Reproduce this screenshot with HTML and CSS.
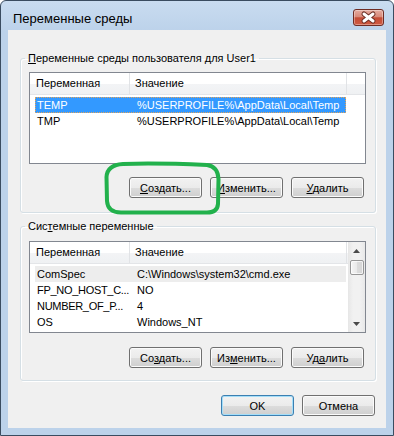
FILE: index.html
```html
<!DOCTYPE html>
<html lang="ru">
<head>
<meta charset="utf-8">
<title>Переменные среды</title>
<link rel="stylesheet" href="styles.css">
</head>
<body>
<div class="window">
  <div class="titlebar">
    <span class="title">Переменные среды</span>
    <div class="close">
      <svg width="29" height="15" viewBox="0 0 29 15">
        <path d="M10 4 L19 11 M19 4 L10 11" stroke="#6d3027" stroke-width="5" stroke-linecap="round"/>
        <path d="M10 4 L19 11 M19 4 L10 11" stroke="#ffffff" stroke-width="3" stroke-linecap="round"/>
      </svg>
    </div>
  </div>
  <div class="client">
    <fieldset class="group">
      <legend class="group-title"><u>П</u>еременные среды пользователя для User1</legend>
      <div class="listview">
        <div class="lv-main">
          <div class="lv-head">
            <div class="hcell c1">Переменная</div>
            <div class="hcell c2">Значение</div>
          </div>
          <div class="lv-row selected">
            <div class="cell c1">TEMP</div>
            <div class="cell c2">%USERPROFILE%\AppData\Local\Temp</div>
          </div>
          <div class="lv-row">
            <div class="cell c1">TMP</div>
            <div class="cell c2">%USERPROFILE%\AppData\Local\Temp</div>
          </div>
        </div>
      </div>
      <div class="btnrow">
        <button class="btn"><u>С</u>оздать...</button>
        <button class="btn"><u>И</u>зменить...</button>
        <button class="btn"><u>У</u>далить</button>
      </div>
    </fieldset>

    <fieldset class="group group2">
      <legend class="group-title">Сис<u>т</u>емные переменные</legend>
      <div class="listview">
        <div class="lv-main">
          <div class="lv-head">
            <div class="hcell c1">Переменная</div>
            <div class="hcell c2">Значение</div>
          </div>
          <div class="lv-row inactive">
            <div class="cell c1">ComSpec</div>
            <div class="cell c2">C:\Windows\system32\cmd.exe</div>
          </div>
          <div class="lv-row">
            <div class="cell c1 tight">FP_NO_HOST_C...</div>
            <div class="cell c2">NO</div>
          </div>
          <div class="lv-row">
            <div class="cell c1 tight">NUMBER_OF_P...</div>
            <div class="cell c2">4</div>
          </div>
          <div class="lv-row">
            <div class="cell c1">OS</div>
            <div class="cell c2">Windows_NT</div>
          </div>
        </div>
        <div class="scrollbar">
          <div class="sb-arrow">
            <svg width="7" height="4" viewBox="0 0 7 4"><path d="M0 4 L3.5 0 L7 4 Z" fill="#4a4a4a"/></svg>
          </div>
          <div class="sb-thumb"></div>
          <div class="sb-track"></div>
          <div class="sb-arrow">
            <svg width="7" height="4" viewBox="0 0 7 4"><path d="M0 0 L7 0 L3.5 4 Z" fill="#4a4a4a"/></svg>
          </div>
        </div>
      </div>
      <div class="btnrow">
        <button class="btn">Со<u>з</u>дать...</button>
        <button class="btn">Из<u>м</u>енить...</button>
        <button class="btn">Уд<u>а</u>лить</button>
      </div>
    </fieldset>

    <div class="footer">
      <button class="btn default">OK</button>
      <button class="btn">Отмена</button>
    </div>
  </div>

  <svg class="annotation" width="121" height="56" viewBox="0 0 121 56">
    <path d="M20 3 C50 2 80 3 104 4 C112 5 115 10 115.5 18 L115 43 C114.5 49 111 51.5 104 51.5 L18 51.5 C10 51.5 4.5 48 4 40 L3.5 16 C4 8 10 3.5 20 3 Z" fill="none" stroke="#22b14c" stroke-width="4"/>
  </svg>
</div>
</body>
</html>
```

FILE: styles.css
```css
* {
  box-sizing: border-box;
}

html,
body {
  margin: 0;
  padding: 0;
  background: #ffffff;
}

body {
  font-family: "Liberation Sans", Arial, sans-serif;
  font-size: 11px;
  color: #000000;
}

.window {
  position: relative;
  width: 394px;
  height: 436px;
  display: flex;
  flex-direction: column;
  padding: 0 7px 7px 7px;
  border: 1px solid #3a4c60;
  border-radius: 6px 6px 0 0;
  background: linear-gradient(#c9dcf0 0px, #bcd2ea 30px, #bcd2ea 100%);
}

.titlebar {
  height: 29px;
  flex: none;
  display: flex;
  justify-content: space-between;
  align-items: flex-start;
}

.title {
  margin: 10px 0 0 5px;
  font-size: 13px;
  line-height: 16px;
}

.close {
  width: 31px;
  height: 17px;
  margin: 8px 2px 0 0;
  border: 1px solid #6e2c24;
  border-radius: 3px;
  background: linear-gradient(#e5ab9f 0%, #d88a7a 45%, #c44c36 52%, #cf5a41 100%);
  box-shadow: inset 0 0 0 1px rgba(255, 255, 255, 0.35);
  display: flex;
}

.client {
  flex: 1;
  background: #f0f0f0;
  padding: 21px 10px 0 12px;
  display: flex;
  flex-direction: column;
}

.group {
  margin: 0;
  min-width: 0;
  padding: 7px 9px 14px 8px;
  border: 1px solid #d5dfe5;
  border-radius: 3px;
  box-shadow: inset 1px 1px 0 #ffffff, 1px 1px 0 #ffffff;
}

.group2 {
  margin-top: 6px;
  padding-top: 8px;
  padding-bottom: 12px;
}

.group-title {
  margin-left: -4px;
  padding: 0 3px;
  line-height: 14px;
  font-size: 11px;
}

.listview {
  height: 92px;
  display: flex;
  border: 1px solid #828790;
  background: #ffffff;
}

.lv-main {
  flex: 1;
  min-width: 0;
}

.lv-head {
  display: flex;
  height: 22px;
  margin-bottom: 2px;
  background: linear-gradient(#ffffff 0%, #ffffff 50%, #f3f4f6 51%, #eff1f3 100%);
  border-bottom: 1px solid #e3e5e8;
}

.hcell {
  line-height: 21px;
  white-space: nowrap;
  overflow: hidden;
}

.hcell.c1 {
  width: 100px;
  padding-left: 6px;
  border-right: 1px solid #e1e3e6;
}

.hcell.c2 {
  width: 217px;
  padding-left: 5px;
  border-right: 1px solid #e1e3e6;
}

.lv-row {
  display: flex;
  width: 311px;
  height: 16px;
  margin-left: 5px;
  line-height: 17px;
  white-space: nowrap;
}

.cell {
  overflow: visible;
}

.cell.c1 {
  width: 95px;
  flex: none;
  padding-left: 2px;
}

.cell.tight {
  letter-spacing: -0.3px;
}

.cell.c2 {
  flex: 1;
  padding-left: 7px;
}

.lv-row.selected {
  background: #3399ff;
  color: #ffffff;
  outline: 1px dotted #e2a45a;
  outline-offset: -1px;
}

.lv-row.inactive {
  background: #ededed;
}

.scrollbar {
  width: 17px;
  flex: none;
  display: flex;
  flex-direction: column;
  background: linear-gradient(90deg, #e6e6e6 0%, #f1f1f1 30%, #f1f1f1 70%, #e8e8e8 100%);
}

.sb-arrow {
  height: 17px;
  flex: none;
  display: flex;
  align-items: center;
  justify-content: center;
}

.sb-thumb {
  height: 15px;
  margin: 1px 1px 0 2px;
  border: 1px solid #979797;
  border-radius: 2px;
  background: linear-gradient(90deg, #f5f5f5 0%, #e9e9e9 50%, #dcdcdc 51%, #d5d5d5 100%);
  box-shadow: inset 0 0 0 1px rgba(255, 255, 255, 0.7);
}

.sb-track {
  flex: 1;
}

.btnrow {
  display: flex;
  justify-content: flex-end;
  gap: 8px;
  margin-top: 13px;
  padding-right: 2px;
}

.group2 .btnrow {
  margin-top: 14px;
}

.btn {
  width: 73px;
  height: 21px;
  padding: 0;
  font-family: "Liberation Sans", Arial, sans-serif;
  font-size: 11px;
  color: #000000;
  border: 1px solid #707070;
  border-radius: 3px;
  background: linear-gradient(#f2f2f2 0%, #ebebeb 50%, #dddddd 51%, #cfcfcf 100%);
  box-shadow: inset 0 0 0 1px #fbfbfb;
}

.btn.default {
  border-color: #3c7fb1;
  box-shadow: inset 0 0 0 1px #a4def9;
}

.footer {
  display: flex;
  justify-content: flex-end;
  gap: 8px;
  margin-top: 14px;
  padding-right: 1px;
}

.annotation {
  position: absolute;
  left: 102px;
  top: 160px;
}
```
